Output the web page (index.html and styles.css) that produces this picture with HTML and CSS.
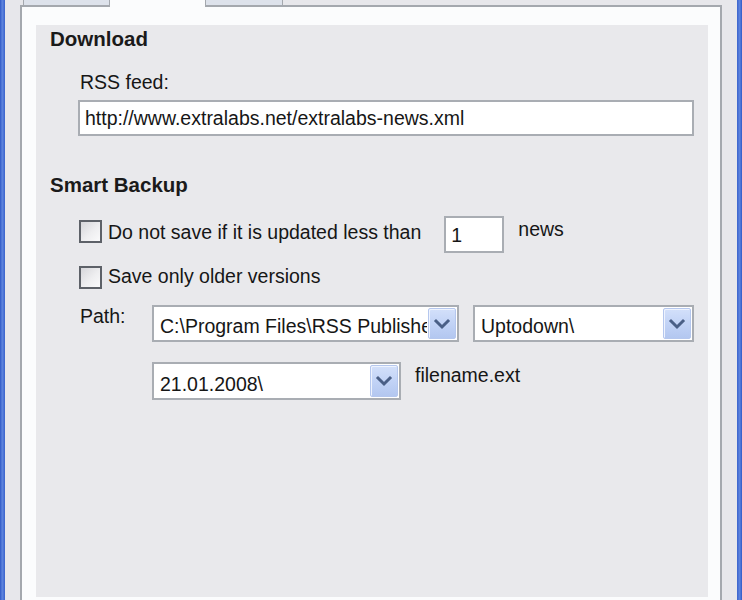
FILE: index.html
```html
<!DOCTYPE html>
<html>
<head>
<meta charset="utf-8">
<link rel="stylesheet" href="styles.css">
</head>
<body>
<div class="window">
  <div class="edge"></div>
  <div class="client">
    <div class="dialog">
      <div class="tabstrip">
        <div class="tab-start"></div>
        <div class="tab tab-first"></div>
        <div class="tab tab-active"></div>
        <div class="tab tab-third"></div>
        <div class="tab-fill"></div>
      </div>
      <div class="tabpage">
        <div class="panel">
          <div class="title">Download</div>
          <div class="label label-rss">RSS feed:</div>
          <div class="textbox textbox-url"><span class="field-text">http://www.extralabs.net/extralabs-news.xml</span></div>

          <div class="title title-backup">Smart Backup</div>
          <div class="row row-check1">
            <div class="check check-1"></div>
            <div class="label check-label check-label-1">Do not save if it is updated less than</div>
            <div class="textbox textbox-num"><span class="field-text">1</span></div>
            <div class="label news">news</div>
          </div>
          <div class="row row-check2">
            <div class="check check-2"></div>
            <div class="label check-label">Save only older versions</div>
          </div>
          <div class="row row-path">
            <div class="label path-label">Path:</div>
            <div class="combo combo-program">
              <span class="combo-text">C:\Program Files\RSS Publisher\</span>
              <span class="drop"><svg width="28" height="31" viewBox="0 0 28 31"><polyline points="8,13 14,19 20,13" fill="none" stroke="#4a5f86" stroke-width="3" stroke-linecap="square"/></svg></span>
            </div>
            <div class="combo combo-site">
              <span class="combo-text">Uptodown\</span>
              <span class="drop"><svg width="28" height="31" viewBox="0 0 28 31"><polyline points="8,13 14,19 20,13" fill="none" stroke="#4a5f86" stroke-width="3" stroke-linecap="square"/></svg></span>
            </div>
          </div>
          <div class="row row-date">
            <div class="combo combo-date">
              <span class="combo-text combo-text-date">21.01.2008\</span>
              <span class="drop"><svg width="28" height="32" viewBox="0 0 28 32"><polyline points="8,13 14,19 20,13" fill="none" stroke="#4a5f86" stroke-width="3" stroke-linecap="square"/></svg></span>
            </div>
            <div class="label filename">filename.ext</div>
          </div>
        </div>
      </div>
    </div>
  </div>
  <div class="edge edge-right"></div>
</div>
</body>
</html>
```

FILE: styles.css
```css
* { box-sizing: border-box; }
html, body { margin: 0; padding: 0; }
body {
  width: 742px;
  height: 600px;
  overflow: hidden;
  font-family: "Liberation Sans", Arial, sans-serif;
  color: #161616;
}
.window {
  display: flex;
  width: 742px;
  height: 600px;
}
.edge {
  width: 5px;
  background: linear-gradient(90deg, #2f58c6 0%, #5f85de 45%, #3a63cc 100%);
}
.edge-right {
  background: linear-gradient(90deg, #3a63cc 0%, #5f85de 55%, #2f58c6 100%);
}
.client {
  flex: 1;
  background: #e7e7eb;
  padding: 0 15px;
}
.dialog {
  display: flex;
  flex-direction: column;
  height: 600px;
}
.tabstrip {
  display: flex;
  height: 7px;
}
.tab-start {
  width: 3px;
  border-bottom: 2px solid #a4a8ae;
}
.tab {
  background: #dde2eb;
  border-left: 1px solid #a4a8ae;
  border-right: 1px solid #a4a8ae;
  border-bottom: 2px solid #a4a8ae;
}
.tab-first { width: 87px; }
.tab-active {
  width: 95px;
  background: #fbfcfd;
  border: none;
}
.tab-third { width: 78px; }
.tab-fill {
  flex: 1;
  border-bottom: 2px solid #a4a8ae;
}
.tabpage {
  flex: 1;
  display: flex;
  flex-direction: column;
  background: #fbfcfd;
  border-left: 2px solid #a4a8ae;
  border-right: 2px solid #a4a8ae;
  padding: 18px 12px 3px 14px;
}
.panel {
  flex: 1;
  background: #e9e9ec;
  padding: 2px 0 0 14px;
  display: flex;
  flex-direction: column;
  align-items: flex-start;
}
.title {
  font-weight: bold;
  font-size: 20.5px;
  line-height: 24px;
  height: 24px;
  color: #1a1a1a;
}
.title-backup { margin-top: 37px; }
.label {
  font-size: 19.5px;
  line-height: 22px;
  white-space: nowrap;
}
.label-rss {
  margin-top: 20px;
  margin-left: 30px;
}
.textbox {
  display: flex;
  align-items: center;
  background: #ffffff;
  border: 2px solid #a9adb3;
  font-size: 19.5px;
  line-height: 22px;
  white-space: nowrap;
}
.textbox-url {
  margin-top: 7px;
  margin-left: 28px;
  width: 616px;
  height: 36px;
  padding-left: 5px;
}
.row {
  display: flex;
  align-items: flex-start;
}
.row-check1 {
  margin-top: 19px;
  margin-left: 29px;
  height: 37px;
}
.check {
  width: 23px;
  height: 23px;
  border: 2px solid #5d6168;
  background: linear-gradient(135deg, #d6d6da 0%, #eeeef0 55%, #fafafb 100%);
}
.check-1 { margin-top: 4px; }
.check-label { margin-left: 6px; }
.check-label-1 { margin-top: 5px; }
.textbox-num {
  margin-left: 23px;
  width: 60px;
  height: 37px;
  padding-left: 5px;
}
.news {
  margin-left: 14px;
  margin-top: 2px;
}
.row-check2 {
  margin-top: 12px;
  margin-left: 29px;
  height: 24px;
}
.check-2 { margin-top: 1px; }
.row-path {
  margin-top: 16px;
  margin-left: 30px;
  height: 37px;
}
.path-label { width: 72px; }
.combo {
  display: flex;
  align-items: center;
  height: 37px;
  background: #ffffff;
  border: 2px solid #a9adb3;
}
.combo-program { width: 307px; }
.combo-site { width: 221px; margin-left: 14px; }
.combo-text {
  flex: 1;
  overflow: hidden;
  white-space: nowrap;
  font-size: 19.5px;
  line-height: 22px;
  padding: 4px 0 0 6px;
}
.combo-text-date { padding-top: 6px; }
.drop {
  display: block;
  width: 28px;
  align-self: stretch;
  margin: 1px;
  border: 1px solid #b5c7ee;
  border-radius: 2px;
  background: linear-gradient(180deg, #d3e0fa 0%, #c2d3f6 50%, #b3c7f0 100%);
  box-shadow: inset 1px 1px 0 #eef3fe;
  overflow: hidden;
}
.drop svg {
  display: block;
  margin: -1px 0 0 -1px;
}
.row-date {
  margin-top: 20px;
  margin-left: 102px;
  height: 38px;
}
.combo-date { width: 249px; height: 38px; }
.filename {
  margin-left: 14px;
  margin-top: 2px;
}
```
